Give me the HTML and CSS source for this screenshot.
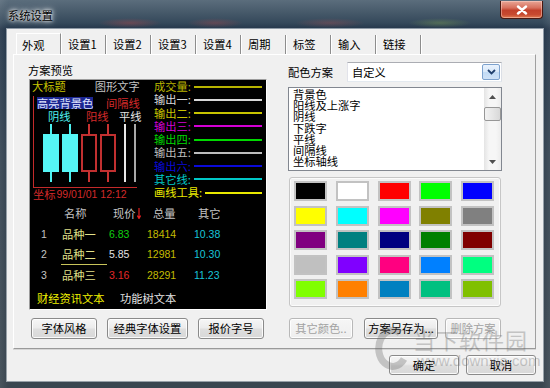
FILE: index.html
```html
<!DOCTYPE html>
<html lang="zh-CN">
<head>
<meta charset="utf-8">
<title>系统设置</title>
<link rel="stylesheet" href="styles.css">
</head>
<body>
<div class="window">
  <header class="titlebar">
    <span class="title">系统设置</span>
    <div class="close"><svg width="12" height="10" viewBox="0 0 12 10"><path d="M2 1.5 L10 8.5 M10 1.5 L2 8.5" stroke="#fff" stroke-width="2.4" stroke-linecap="round"/></svg></div>
  </header>
  <main class="client">
    <nav class="tabs">
      <div class="tab active">外观</div>
      <div class="tab">设置1</div>
      <div class="tab">设置2</div>
      <div class="tab">设置3</div>
      <div class="tab">设置4</div>
      <div class="tab">周期</div>
      <div class="tab">标签</div>
      <div class="tab">输入</div>
      <div class="tab">链接</div>
    </nav>
    <section class="panel">
      <div class="col-left">
        <div class="caption">方案预览</div>
        <div class="preview">
          <div class="pv-top">
            <div class="pv-left">
              <div class="pv-title"><span class="c-olive">大标题</span><span class="c-gray gfx">图形文字</span></div>
              <div class="pv-frame">
                <div class="pv-hl"><span class="hl">高亮背景色</span><span class="c-red sep">间隔线</span></div>
                <div class="pv-kind"><span class="c-cyan">阴线</span><span class="c-red yang">阳线</span><span class="c-white ping">平线</span></div>
                <div class="pv-candles">
                  <div class="candle down"><div class="body"></div></div>
                  <div class="candle down"><div class="body"></div></div>
                  <div class="candle up"><div class="body"></div></div>
                  <div class="candle up"><div class="body"></div></div>
                  <div class="flat f1"></div>
                  <div class="flat f2"></div>
                </div>
              </div>
              <div class="pv-axis"><span>坐标</span><span class="num">99/01/01 12:12</span></div>
            </div>
            <div class="pv-legend">
              <div class="lg lg-vol"><span>成交量:</span><i></i></div>
              <div class="lg lg-o1"><span>输出一:</span><i></i></div>
              <div class="lg lg-o2"><span>输出二:</span><i></i></div>
              <div class="lg lg-o3"><span>输出三:</span><i></i></div>
              <div class="lg lg-o4"><span>输出四:</span><i></i></div>
              <div class="lg lg-o5"><span>输出五:</span><i></i></div>
              <div class="lg lg-o6"><span>输出六:</span><i></i></div>
              <div class="lg lg-oth"><span>其它线:</span><i></i></div>
              <div class="lg lg-draw"><span>画线工具:</span><i></i></div>
            </div>
          </div>
          <div class="pv-table">
            <div class="tr th">
              <span></span>
              <span class="h-name">名称</span>
              <span class="h-price">现价<svg class="arrow" width="4" height="11" viewBox="0 0 4 11"><path d="M2 0 V10 M0.3 7.5 L2 10.5 L3.7 7.5" stroke="#e02020" stroke-width="1.2" fill="none"/></svg></span>
              <span class="h-vol">总量</span>
              <span class="h-oth">其它</span>
            </div>
            <div class="tr">
              <span class="idx">1</span><span class="name">品种一</span><span class="price p-up">6.83</span><span class="vol">18414</span><span class="oth">10.38</span>
            </div>
            <div class="tr mid">
              <span class="idx">2</span><span class="name uline">品种二</span><span class="price p-flat">5.85</span><span class="vol">12981</span><span class="oth">10.30</span>
            </div>
            <div class="tr">
              <span class="idx">3</span><span class="name">品种三</span><span class="price p-down">3.16</span><span class="vol">28291</span><span class="oth">11.23</span>
            </div>
          </div>
          <div class="pv-foot"><span class="c-yellow">财经资讯文本</span><span class="c-white fn">功能树文本</span></div>
        </div>
        <div class="btnrow">
          <button class="btn w66">字体风格</button>
          <button class="btn w81">经典字体设置</button>
          <button class="btn w66">报价字号</button>
        </div>
      </div>

      <div class="col-right">
        <div class="scheme">
          <span class="scheme-label">配色方案</span>
          <div class="combo"><span>自定义</span><div class="combo-btn"><svg width="9" height="6" viewBox="0 0 9 6"><path d="M1 1 L4.5 4.5 L8 1" stroke="#21406e" stroke-width="1.8" fill="none"/></svg></div></div>
        </div>
        <div class="list">
          <div class="items">
            <div>背景色</div>
            <div>阳线及上涨字</div>
            <div>阴线</div>
            <div>下跌字</div>
            <div>平线</div>
            <div>间隔线</div>
            <div>坐标轴线</div>
          </div>
          <div class="vscroll">
            <div class="sb-btn"><svg width="7" height="4" viewBox="0 0 7 4"><path d="M0 4 L3.5 0 L7 4 Z" fill="#505050"/></svg></div>
            <div class="thumb"></div>
            <div class="sb-space"></div>
            <div class="sb-btn"><svg width="7" height="4" viewBox="0 0 7 4"><path d="M0 0 L3.5 4 L7 0 Z" fill="#505050"/></svg></div>
          </div>
        </div>
        <div class="colors">
          <div class="sw"></div><div class="sw"></div><div class="sw"></div><div class="sw"></div><div class="sw"></div>
          <div class="sw"></div><div class="sw"></div><div class="sw"></div><div class="sw"></div><div class="sw"></div>
          <div class="sw"></div><div class="sw"></div><div class="sw"></div><div class="sw"></div><div class="sw"></div>
          <div class="sw"></div><div class="sw"></div><div class="sw"></div><div class="sw"></div><div class="sw"></div>
          <div class="sw"></div><div class="sw"></div><div class="sw"></div><div class="sw"></div><div class="sw"></div>
        </div>
        <div class="btnrow right">
          <button class="btn w64" disabled>其它颜色..</button>
          <button class="btn w74 saveas">方案另存为...</button>
          <button class="btn w56" disabled>删除方案</button>
        </div>
      </div>
    </section>
    <div class="footer">
      <button class="btn w70 ok">确定</button>
      <button class="btn w70">取消</button>
    </div>
  </main>
  <div class="watermark" aria-hidden="true">
    <svg class="wm-logo" width="38" height="46" viewBox="0 0 38 46"><path d="M27 7 A14 18 0 1 0 31 33" fill="none" stroke="#6a6a6a" stroke-width="7"/></svg>
    <span class="wm-name">当下软件园</span>
    <span class="wm-url">www.downxia.com</span>
  </div>
</div>
</body>
</html>
```

FILE: styles.css
```css
* { box-sizing: border-box; }
html, body { margin: 0; padding: 0; }
body {
  width: 550px;
  height: 388px;
  overflow: hidden;
  background: #2a3743;
  font-family: "Noto Sans CJK SC", "Liberation Sans", sans-serif;
  font-size: 11.25px;
  color: #000;
}

.window {
  position: relative;
  width: 550px;
  height: 388px;
  display: flex;
  flex-direction: column;
  background:
    radial-gradient(ellipse 45px 7px at 130px 23px, rgba(200, 70, 70, .35), transparent 70%),
    radial-gradient(ellipse 40px 7px at 215px 23px, rgba(200, 70, 70, .3), transparent 70%),
    radial-gradient(ellipse 50px 7px at 330px 23px, rgba(190, 80, 80, .3), transparent 70%),
    radial-gradient(ellipse 45px 7px at 440px 23px, rgba(150, 190, 80, .3), transparent 70%),
    linear-gradient(to right, rgba(255,255,255,.08), transparent 8px, transparent 542px, rgba(255,255,255,.08)),
    linear-gradient(to bottom, #5b6d7c 0%, #34485a 6%, #24364a 7.5%, #334250 40%, #3a4650 100%);
}

/* title bar */
.titlebar {
  height: 29px;
  flex: none;
  display: flex;
  justify-content: space-between;
  align-items: flex-start;
  padding: 0 7px 0 8px;
}
.title {
  margin-top: 8px;
  line-height: 14px;
  color: #000;
  text-shadow: 0 0 5px #fff, 0 0 3px rgba(255,255,255,.9), 0 0 8px rgba(255,255,255,.7);
}
.close {
  width: 43px;
  height: 18px;
  margin-top: 1px;
  border: 1px solid #4a1810;
  border-top: none;
  border-radius: 0 0 4px 4px;
  background: linear-gradient(#e9a696 0%, #d7705d 40%, #c2402a 55%, #c84a30 80%, #e07a50 100%);
  box-shadow: inset 0 0 0 1px rgba(255,220,210,.45);
  display: flex;
  align-items: center;
  justify-content: center;
}

/* client area */
.client {
  margin: 0 7px;
  height: 352px;
  flex: none;
  background: #f0f0f0;
  box-shadow: 0 0 0 1px rgba(230,235,240,.55);
  display: flex;
  flex-direction: column;
  padding: 4px 7px 0 6px;
}

.tabs {
  height: 21px;
  display: flex;
  align-items: flex-end;
  padding-left: 3px;
}
.tab {
  width: 45px;
  height: 19px;
  padding-left: 7px;
  line-height: 18px;
  border-right: 1px solid #8d8d8d;
  box-shadow: 1px 0 0 #fff;
  white-space: nowrap;
}
.tab.active {
  height: 21px;
  padding-left: 5px;
  line-height: 22px;
  border-left: 1px solid #fff;
  border-top: 1px solid #fff;
}

.panel {
  height: 295px;
  border: 1px solid;
  border-color: #fff #a0a0a0 #9a9a9a #fff;
  box-shadow: 0 1px 0 #d6d6d6;
  display: grid;
  grid-template-columns: 238px 214px;
  column-gap: 21px;
  align-items: start;
  padding: 7px 0 0 15px;
}

.col-left, .col-right { display: flex; flex-direction: column; }

.caption {
  margin-top: 2px;
  margin-left: -1px;
  height: 13px;
  line-height: 13px;
}

/* preview */
.preview {
  margin-top: 2px;
  width: 238px;
  height: 231px;
  background: #000;
  border: 1px solid;
  border-color: #9c9c9c #fff #fff #9c9c9c;
  display: flex;
  flex-direction: column;
  line-height: 13px;
  overflow: hidden;
  white-space: nowrap;
}
.c-olive { color: #c8c400; }
.c-gray { color: #c4c4c4; }
.c-red { color: #d42a2a; }
.c-cyan { color: #4ef0f0; }
.c-white { color: #e4e4e4; }
.c-yellow { color: #f0f000; }

.pv-top { display: flex; height: 121px; }
.pv-left { width: 124px; }
.pv-title { height: 13px; padding-left: 2px; display: flex; align-items: center; }
.gfx { margin-left: 29px; }

.pv-frame {
  margin: 3px 0 0 3px;
  width: 104px;
  height: 92px;
  border-left: 1px solid #c42a2a;
  border-bottom: 1px solid #c42a2a;
  padding-top: 1px;
}
.pv-hl { height: 12px; display: flex; align-items: center; padding-left: 3px; }
.hl {
  width: 56px;
  height: 12px;
  line-height: 12px;
  background: #1c2690;
  color: #dfe4ff;
}
.sep { margin-left: 13px; }
.pv-kind { height: 15px; display: flex; align-items: center; padding-left: 14px; }
.yang { margin-left: 15.5px; }
.ping { margin-left: 10.5px; }

.pv-candles { height: 58px; display: flex; gap: 3px; padding-left: 9px; }
.candle {
  width: 16px;
  height: 58px;
  display: flex;
  align-items: center;
}
.candle .body { width: 16px; height: 38px; }
.candle.down { background: linear-gradient(to right, transparent 7px, #4ef0f0 7px, #4ef0f0 9px, transparent 9px); }
.candle.down .body { background: #55f6f6; }
.candle.up { background: linear-gradient(to right, transparent 7px, #c83232 7px, #c83232 9px, transparent 9px); }
.candle.up .body { background: #000; border: 2px solid #c23030; }
.flat { width: 2px; height: 58px; margin-left: 5px; }
.f1 { background: #e8e8e8; }
.f2 { background: #a8a8a8; }

.pv-axis { height: 13px; padding-left: 3px; display: flex; align-items: center; color: #d42a2a; }
.num { font-family: "Liberation Sans", sans-serif; font-size: 10.5px; margin-left: 1px; }

.pv-legend { flex: 1; padding-right: 4px; }
.lg { height: 13.25px; display: flex; align-items: center; }
.lg i { flex: 1; height: 2px; margin-left: 3px; background: currentColor; }
.lg-vol { color: #b8b400; }
.lg-o1 { color: #d8d8d8; }
.lg-o2 { color: #c8c400; }
.lg-o3 { color: #d400d4; }
.lg-o4 { color: #00d800; }
.lg-o5 { color: #bcbcbc; }
.lg-o6 { color: #0a0ad8; }
.lg-oth { color: #00c8c8; }
.lg-draw { color: #e8e800; }

.pv-table { margin-top: 2px; }
.tr {
  display: grid;
  grid-template-columns: 31px 46px 39px 46px 1fr;
  align-items: center;
  height: 20px;
}
.tr.th { height: 21px; color: #c4c4c4; }
.tr.mid { height: 21px; align-items: stretch; }
.tr.mid > span { display: flex; align-items: center; }
.h-name { padding-left: 3px; }
.h-price { padding-left: 6px; display: flex; align-items: center; }
.arrow { margin-left: 1.5px; }
.h-vol { padding-left: 7px; }
.h-oth { padding-left: 6px; }
.idx { padding-left: 11px; color: #c4c4c4; font-family: "Liberation Sans", sans-serif; font-size: 10.5px; }
.name { padding-left: 1px; color: #e2e08a; }
.uline { border-bottom: 1px solid #c8c45a; }
.price, .vol, .oth { font-family: "Liberation Sans", sans-serif; font-size: 10.5px; }
.price { padding-left: 2px; }
.p-up { color: #10d010; }
.p-flat { color: #e4e4e4; }
.p-down { color: #e42828; }
.vol { padding-left: 1px; color: #c4bc00; }
.oth { padding-left: 2px; color: #18c4d8; }

.pv-foot { margin-top: 6px; height: 14px; display: flex; align-items: center; padding-left: 7px; }
.fn { margin-left: 15.5px; }

/* buttons */
.btnrow { margin-top: 8px; display: flex; gap: 10px; padding-left: 2px; }
.btnrow.right { margin-top: 11px; padding-left: 1px; gap: 0; }
.btnrow.right .saveas { margin-left: 11px; margin-right: 7px; }

.btn {
  height: 21px;
  padding: 0;
  font-family: inherit;
  font-size: 11.25px;
  line-height: 19px;
  color: #000;
  border: 1px solid #8a8a8a;
  border-radius: 3px;
  background: linear-gradient(#f6f6f6, #ececec 45%, #dedede 55%, #d8d8d8);
  box-shadow: inset 0 0 0 1px rgba(255,255,255,.85);
  white-space: nowrap;
}
.btn:disabled {
  color: #a2a2a2;
  border-color: #b8b8b8;
  background: linear-gradient(#f6f6f6, #eeeeee);
}
.w56 { width: 56px; }
.w64 { width: 64px; }
.w66 { width: 66px; }
.w70 { width: 70px; }
.w74 { width: 74px; }
.w81 { width: 81px; }

/* right column */
.scheme { height: 20px; display: flex; align-items: center; }
.scheme-label { width: 59px; }
.combo {
  width: 155px;
  height: 20px;
  border: 1px solid #abadb3;
  border-left-color: #e2e3ea;
  border-right-color: #dbdfe6;
  border-bottom-color: #e3e9ef;
  background: #fff;
  display: flex;
  align-items: center;
  justify-content: space-between;
  padding-left: 4px;
}
.combo-btn {
  width: 18px;
  height: 16px;
  margin-right: 1px;
  border: 1px solid #7da2ce;
  border-radius: 2px;
  background: linear-gradient(#eaf3fd, #d9e9fa 48%, #c2dbf5 52%, #cfe2f7);
  display: flex;
  align-items: center;
  justify-content: center;
}

.list {
  margin-top: 5px;
  height: 84px;
  border: 1px solid #828790;
  background: #fff;
  display: flex;
}
.items {
  flex: 1;
  padding: 1px 0 0 4px;
  line-height: 11.2px;
  white-space: nowrap;
}
.vscroll {
  width: 17px;
  display: flex;
  flex-direction: column;
  background: linear-gradient(to right, #e4e4e4, #f6f6f6 30%, #f6f6f6 70%, #ececec);
}
.sb-btn { height: 17px; display: flex; align-items: center; justify-content: center; }
.thumb {
  margin: 2px 0 0 0;
  height: 14px;
  border: 1px solid #979797;
  border-radius: 2px;
  background: linear-gradient(to right, #f2f2f2, #e6e6e6 50%, #d8d8d8);
}
.sb-space { flex: 1; }

.colors {
  margin-top: 6px;
  height: 130px;
  margin-left: 1px;
  width: 212px;
  border: 1px solid #c6c6c6;
  border-radius: 3px;
  box-shadow: inset 0 0 0 1px #fbfbfb;
  display: grid;
  grid-template-columns: repeat(5, 33px);
  grid-auto-rows: 20px;
  column-gap: 8.75px;
  row-gap: 4.5px;
  align-content: start;
  padding: 3px 0 0 4px;
}
.sw { border: 2px solid #c2c2c2; }
.sw:nth-child(1) { background: #000000; }
.sw:nth-child(2) { background: #ffffff; }
.sw:nth-child(3) { background: #ff0000; }
.sw:nth-child(4) { background: #00ff00; }
.sw:nth-child(5) { background: #0000ff; }
.sw:nth-child(6) { background: #ffff00; }
.sw:nth-child(7) { background: #00ffff; }
.sw:nth-child(8) { background: #ff00ff; }
.sw:nth-child(9) { background: #808000; }
.sw:nth-child(10) { background: #808080; }
.sw:nth-child(11) { background: #800080; }
.sw:nth-child(12) { background: #008080; }
.sw:nth-child(13) { background: #000080; }
.sw:nth-child(14) { background: #008000; }
.sw:nth-child(15) { background: #800000; }
.sw:nth-child(16) { background: #c0c0c0; }
.sw:nth-child(17) { background: #8000ff; }
.sw:nth-child(18) { background: #ff0080; }
.sw:nth-child(19) { background: #0080ff; }
.sw:nth-child(20) { background: #00ff80; }
.sw:nth-child(21) { background: #80ff00; }
.sw:nth-child(22) { background: #ff8000; }
.sw:nth-child(23) { background: #0080c0; }
.sw:nth-child(24) { background: #00c080; }
.sw:nth-child(25) { background: #80c000; }

/* footer */
.footer {
  margin-top: 6px;
  display: flex;
  justify-content: flex-end;
  gap: 7px;
}
.footer .btn { height: 20px; line-height: 18px; }

/* watermark overlay */
.watermark {
  position: absolute;
  left: 373px;
  top: 326px;
  display: grid;
  grid-template-columns: 40px auto;
  grid-template-rows: 26px 18px;
  opacity: .33;
  pointer-events: none;
}
.wm-logo { grid-row: 1 / span 2; }
.wm-name {
  font-size: 22px;
  line-height: 26px;
  color: #6a6a6a;
  letter-spacing: 1px;
}
.wm-url {
  font-family: "Liberation Sans", sans-serif;
  font-size: 15px;
  line-height: 18px;
  color: #6a6a6a;
  padding-left: 4px;
}
```
